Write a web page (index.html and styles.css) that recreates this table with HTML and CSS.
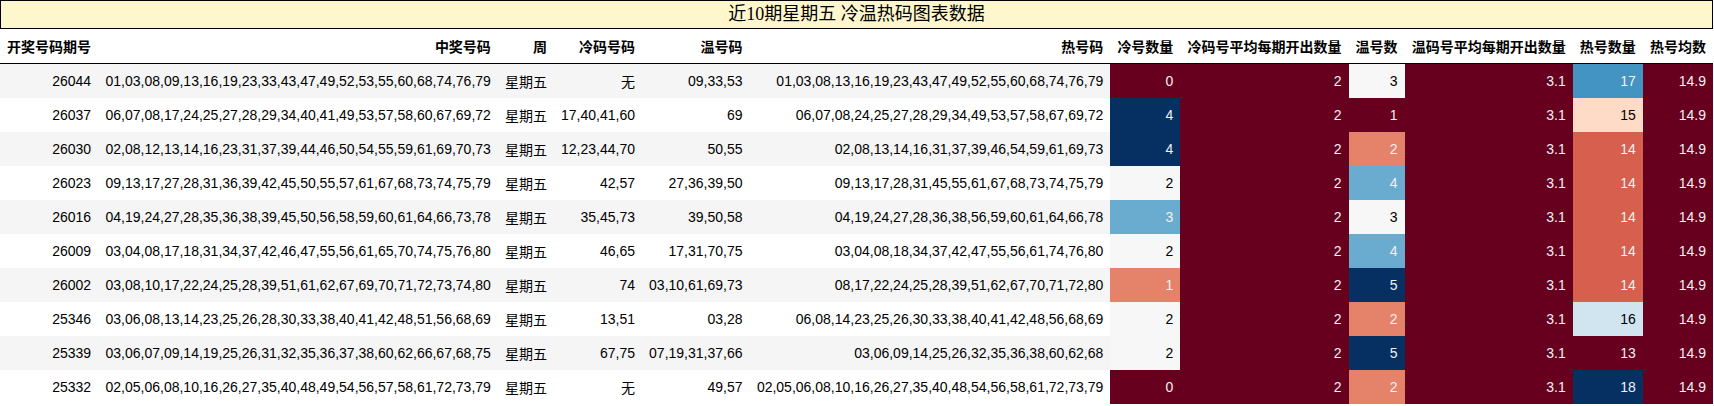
FILE: index.html
```html
<!DOCTYPE html>
<html lang="zh-CN">
<head>
<meta charset="utf-8">
<title>近10期星期五 冷温热码图表数据</title>
<link rel="stylesheet" href="styles.css">
</head>
<body>
<table class="data">
  <caption class="title">近10期星期五 冷温热码图表数据</caption>
  <thead>
    <tr>
      <th>开奖号码期号</th>
      <th>中奖号码</th>
      <th>周</th>
      <th>冷码号码</th>
      <th>温号码</th>
      <th>热号码</th>
      <th>冷号数量</th>
      <th>冷码号平均每期开出数量</th>
      <th>温号数</th>
      <th>温码号平均每期开出数量</th>
      <th>热号数量</th>
      <th>热号均数</th>
    </tr>
  </thead>
  <tbody>
    <tr>
      <td>26044</td><td>01,03,08,09,13,16,19,23,33,43,47,49,52,53,55,60,68,74,76,79</td><td>星期五</td><td>无</td><td>09,33,53</td><td>01,03,08,13,16,19,23,43,47,49,52,55,60,68,74,76,79</td>
      <td class="c-dr">0</td><td class="c-dr">2</td><td class="c-w">3</td><td class="c-dr">3.1</td><td class="c-b">17</td><td class="c-dr">14.9</td>
    </tr>
    <tr>
      <td>26037</td><td>06,07,08,17,24,25,27,28,29,34,40,41,49,53,57,58,60,67,69,72</td><td>星期五</td><td>17,40,41,60</td><td>69</td><td>06,07,08,24,25,27,28,29,34,49,53,57,58,67,69,72</td>
      <td class="c-db">4</td><td class="c-dr">2</td><td class="c-dr">1</td><td class="c-dr">3.1</td><td class="c-pe">15</td><td class="c-dr">14.9</td>
    </tr>
    <tr>
      <td>26030</td><td>02,08,12,13,14,16,23,31,37,39,44,46,50,54,55,59,61,69,70,73</td><td>星期五</td><td>12,23,44,70</td><td>50,55</td><td>02,08,13,14,16,31,37,39,46,54,59,61,69,73</td>
      <td class="c-db">4</td><td class="c-dr">2</td><td class="c-sa">2</td><td class="c-dr">3.1</td><td class="c-or">14</td><td class="c-dr">14.9</td>
    </tr>
    <tr>
      <td>26023</td><td>09,13,17,27,28,31,36,39,42,45,50,55,57,61,67,68,73,74,75,79</td><td>星期五</td><td>42,57</td><td>27,36,39,50</td><td>09,13,17,28,31,45,55,61,67,68,73,74,75,79</td>
      <td class="c-w">2</td><td class="c-dr">2</td><td class="c-lb">4</td><td class="c-dr">3.1</td><td class="c-or">14</td><td class="c-dr">14.9</td>
    </tr>
    <tr>
      <td>26016</td><td>04,19,24,27,28,35,36,38,39,45,50,56,58,59,60,61,64,66,73,78</td><td>星期五</td><td>35,45,73</td><td>39,50,58</td><td>04,19,24,27,28,36,38,56,59,60,61,64,66,78</td>
      <td class="c-lb">3</td><td class="c-dr">2</td><td class="c-w">3</td><td class="c-dr">3.1</td><td class="c-or">14</td><td class="c-dr">14.9</td>
    </tr>
    <tr>
      <td>26009</td><td>03,04,08,17,18,31,34,37,42,46,47,55,56,61,65,70,74,75,76,80</td><td>星期五</td><td>46,65</td><td>17,31,70,75</td><td>03,04,08,18,34,37,42,47,55,56,61,74,76,80</td>
      <td class="c-w">2</td><td class="c-dr">2</td><td class="c-lb">4</td><td class="c-dr">3.1</td><td class="c-or">14</td><td class="c-dr">14.9</td>
    </tr>
    <tr>
      <td>26002</td><td>03,08,10,17,22,24,25,28,39,51,61,62,67,69,70,71,72,73,74,80</td><td>星期五</td><td>74</td><td>03,10,61,69,73</td><td>08,17,22,24,25,28,39,51,62,67,70,71,72,80</td>
      <td class="c-sa">1</td><td class="c-dr">2</td><td class="c-db">5</td><td class="c-dr">3.1</td><td class="c-or">14</td><td class="c-dr">14.9</td>
    </tr>
    <tr>
      <td>25346</td><td>03,06,08,13,14,23,25,26,28,30,33,38,40,41,42,48,51,56,68,69</td><td>星期五</td><td>13,51</td><td>03,28</td><td>06,08,14,23,25,26,30,33,38,40,41,42,48,56,68,69</td>
      <td class="c-w">2</td><td class="c-dr">2</td><td class="c-sa">2</td><td class="c-dr">3.1</td><td class="c-lbl">16</td><td class="c-dr">14.9</td>
    </tr>
    <tr>
      <td>25339</td><td>03,06,07,09,14,19,25,26,31,32,35,36,37,38,60,62,66,67,68,75</td><td>星期五</td><td>67,75</td><td>07,19,31,37,66</td><td>03,06,09,14,25,26,32,35,36,38,60,62,68</td>
      <td class="c-w">2</td><td class="c-dr">2</td><td class="c-db">5</td><td class="c-dr">3.1</td><td class="c-dr">13</td><td class="c-dr">14.9</td>
    </tr>
    <tr>
      <td>25332</td><td>02,05,06,08,10,16,26,27,35,40,48,49,54,56,57,58,61,72,73,79</td><td>星期五</td><td>无</td><td>49,57</td><td>02,05,06,08,10,16,26,27,35,40,48,54,56,58,61,72,73,79</td>
      <td class="c-dr">0</td><td class="c-dr">2</td><td class="c-sa">2</td><td class="c-dr">3.1</td><td class="c-db">18</td><td class="c-dr">14.9</td>
    </tr>
  </tbody>
</table>
</body>
</html>
```
FILE: styles.css
```css
html, body {
  margin: 0;
  padding: 0;
  background: #ffffff;
}

body {
  font-family: "Liberation Sans", "Noto Sans CJK SC", sans-serif;
  font-size: 14px;
  color: #000000;
}

.data {
  width: 1713px;
  border-collapse: collapse;
  border-spacing: 0;
}

.title {
  font-family: "Liberation Serif", "Noto Sans CJK SC", serif;
  font-size: 18px;
  line-height: 27px;
  text-align: center;
  background: #fef7cd;
  border: 1px solid #000000;
  color: #000000;
}

.data th {
  font-weight: bold;
  text-align: right;
  white-space: nowrap;
  padding: 0 7px;
  height: 34px;
  border-bottom: 1px solid #000000;
}

.data td {
  text-align: right;
  white-space: nowrap;
  padding: 0 7px;
  height: 34px;
}

.data tbody tr:nth-child(odd) {
  background: #f5f5f5;
}

.data tbody tr:nth-child(even) {
  background: #ffffff;
}

.c-dr { background: #67001f; color: #f1f1f1; }
.c-db { background: #053061; color: #f1f1f1; }
.c-w { background: #f7f7f7; color: #000000; }
.c-lb { background: #6aacd0; color: #f1f1f1; }
.c-sa { background: #e5836a; color: #f1f1f1; }
.c-b { background: #4393c3; color: #f1f1f1; }
.c-pe { background: #fddbc7; color: #000000; }
.c-or { background: #d6604d; color: #f1f1f1; }
.c-lbl { background: #d1e5f0; color: #000000; }
```
